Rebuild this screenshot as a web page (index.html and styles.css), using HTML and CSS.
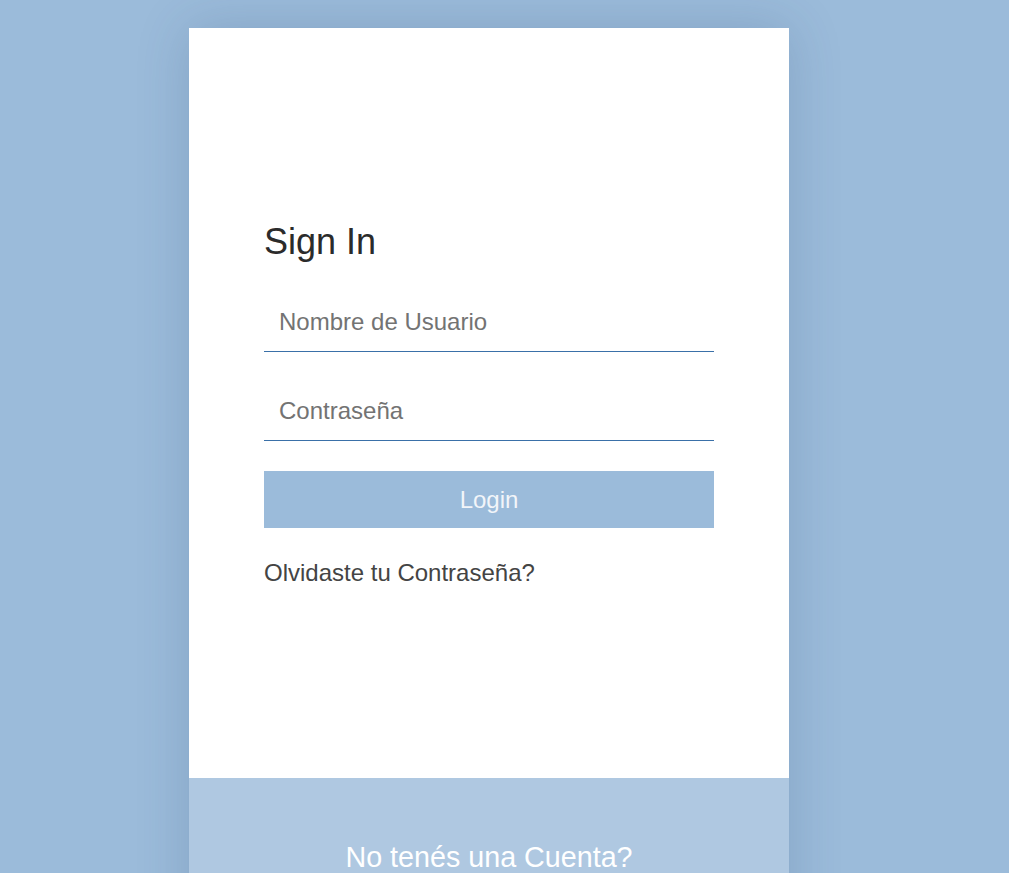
FILE: index.html
```html
<!DOCTYPE html>
<html lang="es">
<head>
<meta charset="utf-8">
<title>Sign In</title>
<link rel="stylesheet" href="styles.css">
</head>
<body>
<div class="card">
  <div class="card-body">
    <h1 class="title">Sign In</h1>
    <form class="form">
      <input class="field" type="text" placeholder="Nombre de Usuario">
      <input class="field" type="password" placeholder="Contraseña">
      <button class="btn" type="button">Login</button>
    </form>
    <a class="forgot" href="#">Olvidaste tu Contraseña?</a>
  </div>
  <div class="card-footer">
    <span class="signup">No tenés una Cuenta?</span>
  </div>
</div>
</body>
</html>
```
FILE: styles.css
```css
html, body {
  margin: 0;
  padding: 0;
  height: 100%;
  overflow: hidden;
}
body {
  background: #9bbbda;
  font-family: "Liberation Sans", Arial, sans-serif;
  padding-right: 31px;
  box-sizing: border-box;
}
.card {
  width: 600px;
  margin: 28px auto 0;
  background: #fff;
  box-shadow: 0 0 50px rgba(40, 70, 110, 0.2);
}
.card-body {
  padding: 196px 75px 0;
  height: 750px;
  box-sizing: border-box;
}
.title {
  margin: 0 0 36px;
  font-size: 36px;
  font-weight: 400;
  color: #2b2b2b;
  line-height: 1;
}
.form {
  display: flex;
  flex-direction: column;
}
.field {
  font-family: inherit;
  font-size: 24px;
  color: #444;
  border: none;
  border-bottom: 1px solid #3a70a8;
  outline: none;
  padding: 0 15px 3px;
  height: 56px;
  box-sizing: border-box;
  margin: 0 0 33px;
  background: transparent;
}
.field + .field {
  margin-bottom: 30px;
}
.field::placeholder {
  color: #737373;
}
.btn {
  height: 57px;
  border: none;
  background: #9bbbda;
  color: #f2f5f9;
  font-family: inherit;
  font-size: 24px;
  padding: 0;
}
.forgot {
  display: block;
  margin-top: 31px;
  font-size: 24px;
  color: #444;
  text-decoration: none;
}
.card-footer {
  background: #afc8e1;
  height: 200px;
  text-align: center;
  padding-top: 63px;
  box-sizing: border-box;
}
.signup {
  font-size: 28.7px;
  color: #fff;
}
```
